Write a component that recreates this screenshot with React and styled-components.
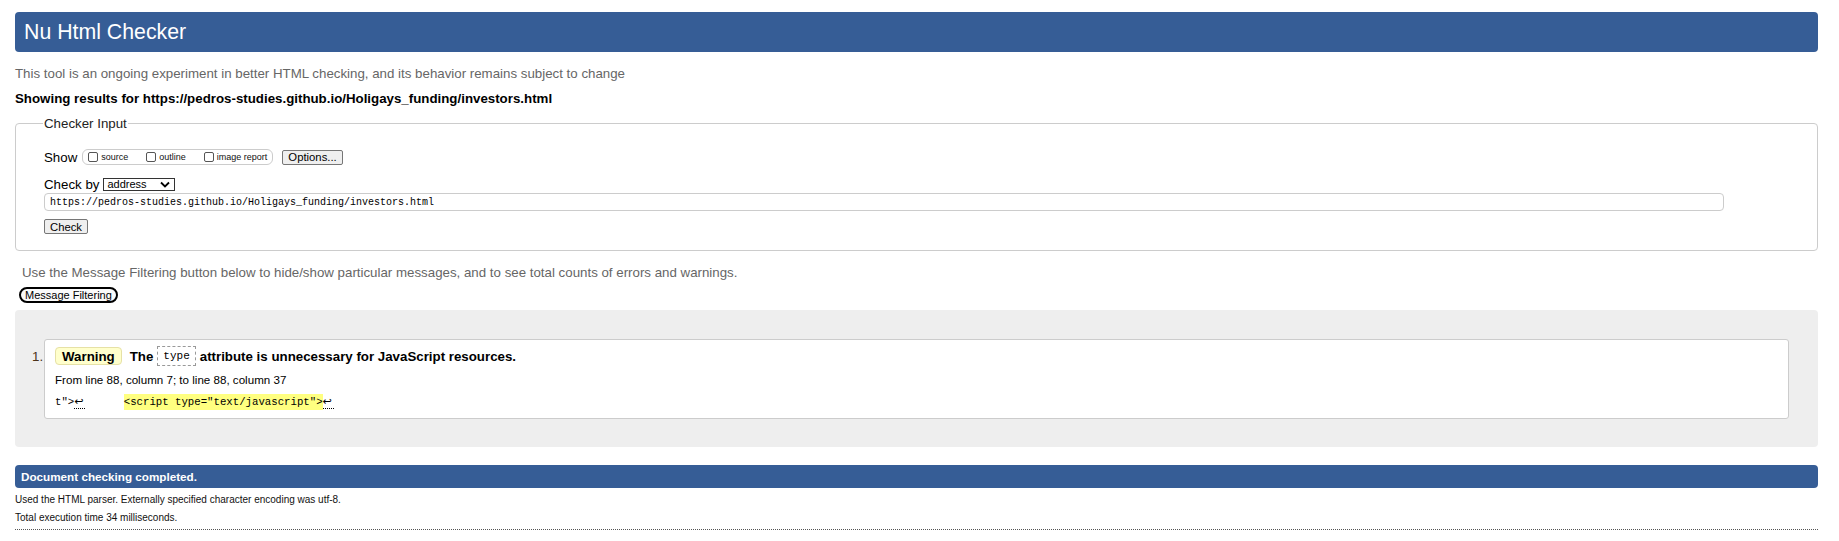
import styled, { createGlobalStyle } from 'styled-components'

const GlobalStyle = createGlobalStyle`
    body {
        margin: 0;
        background: #fff;
        color: #000;
        font-family: "Liberation Sans", Arial, sans-serif;
    }
`

const Page = styled.div`
    padding: 12px 21px 0 15px;
`

const TitleBar = styled.h1`
    margin: 0;
    height: 40px;
    display: flex;
    align-items: center;
    padding-left: 9px;
    background: #365d96;
    color: #fff;
    border-radius: 4px;
    font-size: 21.3px;
    font-weight: normal;
`

const Intro = styled.p`
    margin: 14px 0 0;
    color: #666;
    font-size: 13.3px;
    line-height: 15px;
`

const Showing = styled.p`
    margin: 10px 0 0;
    font-size: 13.3px;
    line-height: 15px;
    font-weight: bold;
`

const Fieldset = styled.fieldset`
    margin: 10px 0 0;
    padding: 4px 28px 16px;
    border: 1px solid #ccc;
    border-radius: 4px;
    display: flex;
    flex-direction: column;
    align-items: flex-start;
`

const Legend = styled.legend`
    margin-left: -1px;
    padding: 0 1px;
    font-size: 13.3px;
    line-height: 15px;
    color: #222;
`

const Row = styled.div`
    display: flex;
    align-items: center;
    height: ${(p) => p.$height}px;
    margin-top: ${(p) => p.$top || 0}px;
    font-size: 13.3px;
`

const ShowGroup = styled.div`
    display: flex;
    align-items: center;
    height: 14px;
    margin-left: 5px;
    padding: 0 5px;
    border: 1px solid #ccc;
    border-radius: 6px;
    gap: 18px;
`

const Option = styled.label`
    display: flex;
    align-items: center;
    gap: 3px;
    font-size: 9px;
    color: #111;
`

const Box = styled.span`
    width: 10px;
    height: 10px;
    box-sizing: border-box;
    border: 1px solid #555;
    border-radius: 2px;
    background: #fff;
`

const Button = styled.button`
    font-family: "Liberation Sans", Arial, sans-serif;
    font-size: 11.3px;
    height: 15px;
    padding: 0 5px;
    background: #efefef;
    border: 1px solid #767676;
    border-radius: 2px;
    color: #000;
    margin: ${(p) => p.$top || 0}px 0 0 ${(p) => p.$left || 0}px;
`

const Select = styled.div`
    display: flex;
    align-items: center;
    justify-content: space-between;
    width: 72px;
    height: 13px;
    margin-left: 4px;
    padding: 0 4px 0 3px;
    box-sizing: border-box;
    border: 1px solid #333;
    font-size: 11px;
`

const UrlInput = styled.div`
    margin-top: 2px;
    width: 1680px;
    height: 18px;
    box-sizing: border-box;
    border: 1px solid #ccc;
    border-radius: 4px;
    padding-left: 5px;
    display: flex;
    align-items: center;
    font-family: "Liberation Mono", "DejaVu Sans Mono", monospace;
    font-size: 10px;
`

const Hint = styled.p`
    margin: 14px 0 0 7px;
    color: #666;
    font-size: 13.3px;
    line-height: 15px;
`

const FilterButton = styled.button`
    display: block;
    margin: 7px 0 0 4px;
    height: 16px;
    padding: 0 4px;
    border: 2px solid #000;
    border-radius: 8px;
    background: #fafafa;
    font-family: "Liberation Sans", Arial, sans-serif;
    font-size: 11px;
    color: #000;
`

const Results = styled.div`
    margin-top: 7px;
    padding: 29px 29px 28px 0;
    background: #eee;
    border-radius: 4px;
`

const List = styled.ol`
    margin: 0;
    padding: 0;
    list-style: none;
`

const Item = styled.li`
    display: flex;
    align-items: flex-start;
`

const Num = styled.span`
    width: 29px;
    box-sizing: border-box;
    padding: 10px 0 0 17px;
    font-size: 13.3px;
    line-height: 15px;
    color: #4d3319;
`

const Message = styled.div`
    flex: 1;
    height: 80px;
    box-sizing: border-box;
    padding: 6px 10px 0;
    background: #fff;
    border: 1px solid #ccc;
    border-radius: 3px;
`

const MsgLine = styled.div`
    display: flex;
    align-items: center;
    height: 20px;
    font-size: 13.3px;
    font-weight: bold;
`

const Badge = styled.span`
    height: 18px;
    box-sizing: border-box;
    display: flex;
    align-items: center;
    padding: 0 6px;
    margin-right: 8px;
    background: #ffffcc;
    border: 1px solid #e6e1a6;
    border-radius: 4px;
`

const Code = styled.code`
    height: 20px;
    box-sizing: border-box;
    display: flex;
    align-items: center;
    margin: 0 4px;
    padding: 0 5px;
    border: 1px dashed #999;
    font-family: "Liberation Mono", "DejaVu Sans Mono", monospace;
    font-weight: normal;
    font-size: 11px;
`

const Location = styled.p`
    margin: 7px 0 0;
    font-size: 11.6px;
    line-height: 14px;
`

const Extract = styled.p`
    margin: 8px 0 0;
    font-family: "Liberation Mono", "DejaVu Sans Mono", monospace;
    font-size: 10.7px;
    line-height: 15px;
    white-space: pre;
`

const Mark = styled.mark`
    padding: 2px 0;
    background: #ffff80;
    color: #000;
`

const Ret = styled.span`
    display: inline-block;
    width: 11px;
    line-height: 12px;
    font-family: "DejaVu Sans", sans-serif;
    font-size: 11px;
    border-bottom: 1px dotted #000;
`

const DoneBar = styled.h2`
    margin: 18px 0 0;
    height: 23px;
    display: flex;
    align-items: center;
    padding-left: 6px;
    background: #365d96;
    color: #fff;
    border-radius: 4px;
    font-size: 11.7px;
    font-weight: bold;
`

const Details = styled.p`
    margin: ${(p) => p.$top}px 0 0;
    font-size: 10px;
    line-height: 12px;
    color: #111;
`

const Rule = styled.hr`
    margin: 5px 0 0;
    border: 0;
    border-top: 1px dotted #555;
`

const Chevron = () => (
    <svg width="10" height="7" viewBox="0 0 10 7">
        <path d="M1 1.5 L5 5.5 L9 1.5" fill="none" stroke="#000" strokeWidth="1.8" />
    </svg>
)

const App = () => {
    const url = 'https://pedros-studies.github.io/Holigays_funding/investors.html'
    return (
        <Page>
            <GlobalStyle />
            <TitleBar>Nu Html Checker</TitleBar>
            <Intro>This tool is an ongoing experiment in better HTML checking, and its behavior remains subject to change</Intro>
            <Showing>Showing results for {url}</Showing>
            <Fieldset>
                <Legend>Checker Input</Legend>
                <Row $height={16} $top={14}>
                    Show
                    <ShowGroup>
                        <Option><Box />source</Option>
                        <Option><Box />outline</Option>
                        <Option><Box />image report</Option>
                    </ShowGroup>
                    <Button $left={9}>Options...</Button>
                </Row>
                <Row $height={14} $top={12}>
                    Check by
                    <Select>address<Chevron /></Select>
                </Row>
                <UrlInput>{url}</UrlInput>
                <Button $top={8}>Check</Button>
            </Fieldset>
            <Hint>Use the Message Filtering button below to hide/show particular messages, and to see total counts of errors and warnings.</Hint>
            <FilterButton>Message Filtering</FilterButton>
            <Results>
                <List>
                    <Item>
                        <Num>1.</Num>
                        <Message>
                            <MsgLine>
                                <Badge>Warning</Badge>
                                The<Code>type</Code>attribute is unnecessary for JavaScript resources.
                            </MsgLine>
                            <Location>From line 88, column 7; to line 88, column 37</Location>
                            <Extract>
                                t"&gt;<Ret>↩</Ret>{'      '}<Mark>&lt;script type="text/javascript"&gt;</Mark><Ret>↩</Ret>
                            </Extract>
                        </Message>
                    </Item>
                </List>
            </Results>
            <DoneBar>Document checking completed.</DoneBar>
            <Details $top={6}>Used the HTML parser. Externally specified character encoding was utf-8.</Details>
            <Details $top={6}>Total execution time 34 milliseconds.</Details>
            <Rule />
        </Page>
    )
}

export default App
